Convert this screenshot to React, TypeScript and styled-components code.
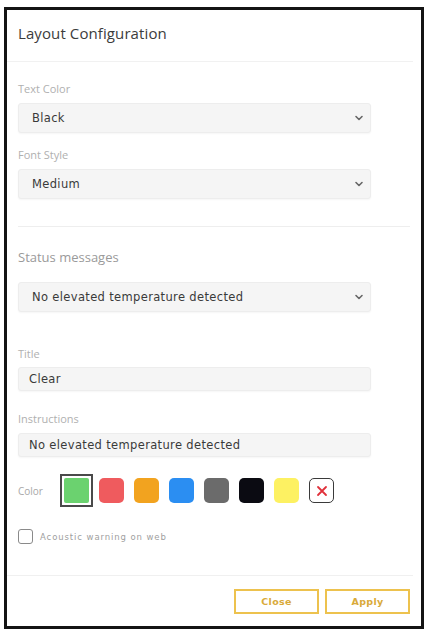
import * as React from 'react';
import styled, { createGlobalStyle } from 'styled-components';

const Global = createGlobalStyle`
  html, body { margin: 0; padding: 0; background: #ffffff; }
  body { font-family: "Open Sans", "DejaVu Sans", sans-serif; }
  * { box-sizing: border-box; }
`;

const Frame = styled.div`
  margin: 7px 0 0 4px;
  width: 420px;
  height: 622px;
  border: 3px solid #141414;
  background: #ffffff;
  display: flex;
  flex-direction: column;
`;

const Header = styled.header`
  height: 52px;
  display: flex;
  align-items: center;
  padding: 0 0 5px 11px;
  margin-right: 8px;
  border-bottom: 1px solid #f1f1f1;
  > h1 {
    margin: 0;
    font-size: 15px;
    font-weight: 400;
    color: #3c3c3c;
    letter-spacing: 0.1px;
  }
`;

const Body = styled.section`
  flex-grow: 1;
  display: flex;
  flex-direction: column;
  padding: 20px 0 0 11px;
`;

const Label = styled.label<{ $top?: number; $size?: number }>`
  display: block;
  margin-top: ${p => p.$top ?? 0}px;
  font-size: ${p => p.$size ?? 11}px;
  line-height: ${p => (p.$size ?? 11) + 3}px;
  color: ${p => (p.$size ? '#9a9a9a' : '#b0b0b0')};
`;

const Field = styled.div<{ $top: number; $h: number; $pad?: number }>`
  margin-top: ${p => p.$top}px;
  width: 353px;
  height: ${p => p.$h}px;
  background: #f5f5f5;
  border: 1px solid #ededed;
  border-radius: 3px;
  box-shadow: 0 1px 2px rgba(0, 0, 0, 0.04);
  display: flex;
  align-items: center;
  justify-content: space-between;
  padding: 0 6px 0 ${p => p.$pad ?? 13}px;
  font-family: "DejaVu Sans", sans-serif;
  font-size: 11.5px;
  letter-spacing: 0.35px;
  color: #3a3a3a;
`;

const Divider = styled.hr`
  margin: 27px 11px 0 0;
  border: none;
  border-top: 1px solid #eeeeee;
  height: 0;
`;

const ColorRow = styled.div`
  margin-top: 17px;
  display: flex;
  align-items: center;
  > span {
    width: 42px;
    font-size: 10px;
    color: #a8a8a8;
  }
`;

const Swatches = styled.div`
  display: flex;
  gap: 2px;
`;

const Slot = styled.div<{ $selected?: boolean }>`
  width: 33px;
  height: 33px;
  padding: 2px;
  border: 2px solid ${p => (p.$selected ? '#4a4a4a' : 'transparent')};
`;

const Chip = styled.div<{ $color: string; $square?: boolean }>`
  width: 25px;
  height: 25px;
  border-radius: ${p => (p.$square ? '2px' : '5px')};
  background: ${p => p.$color};
`;

const NoneChip = styled.div`
  width: 25px;
  height: 25px;
  border-radius: 5px;
  border: 1.5px solid #3a3a3a;
  background: #ffffff;
  display: flex;
  align-items: center;
  justify-content: center;
`;

const CheckRow = styled.label`
  margin-top: 22px;
  display: flex;
  align-items: center;
  gap: 7px;
  > i {
    width: 15px;
    height: 15px;
    border: 1px solid #8a8a8a;
    border-radius: 3px;
    background: #fff;
  }
  > span {
    font-family: "DejaVu Sans", sans-serif;
    font-size: 8.5px;
    letter-spacing: 0.9px;
    color: #a0a0a0;
  }
`;

const Footer = styled.footer`
  height: 51px;
  margin-right: 8px;
  border-top: 1px solid #f0f0f0;
  display: flex;
  justify-content: flex-end;
  align-items: flex-start;
  padding: 13px 3px 0 0;
  gap: 6px;
`;

const Button = styled.button`
  width: 85px;
  height: 25px;
  background: #ffffff;
  border: 2px solid #edc24e;
  font-family: "DejaVu Sans", sans-serif;
  font-size: 9.5px;
  font-weight: 700;
  color: #d9aa3a;
  letter-spacing: 0.3px;
`;

const Chevron = () => (
  <svg width="10" height="10" viewBox="0 0 10 10">
    <path d="M2 3.5 L5 6.5 L8 3.5" fill="none" stroke="#666" strokeWidth="1.6" strokeLinecap="round" strokeLinejoin="round" />
  </svg>
);

const colors = ['#ef5b5e', '#f2a31f', '#2b8ef2', '#6b6b6b', '#0b0b12', '#fdf162'];

export default function App() {
  return (
    <>
      <Global />
      <Frame>
        <Header>
          <h1>Layout Configuration</h1>
        </Header>
        <Body>
          <Label>Text Color</Label>
          <Field $top={7} $h={30}>Black<Chevron /></Field>
          <Label $top={15}>Font Style</Label>
          <Field $top={7} $h={30}>Medium<Chevron /></Field>
          <Divider />
          <Label $top={22} $size={13}>Status messages</Label>
          <Field $top={17} $h={30}>No elevated temperature detected<Chevron /></Field>
          <Label $top={35}>Title</Label>
          <Field $top={6} $h={24} $pad={10}>Clear</Field>
          <Label $top={21}>Instructions</Label>
          <Field $top={7} $h={24} $pad={10}>No elevated temperature detected</Field>
          <ColorRow>
            <span>Color</span>
            <Swatches>
              <Slot $selected><Chip $color="#6bd26f" $square /></Slot>
              {colors.map(c => (
                <Slot key={c}><Chip $color={c} /></Slot>
              ))}
              <Slot>
                <NoneChip>
                  <svg width="12" height="12" viewBox="0 0 12 12">
                    <path d="M2 2 L10 10 M10 2 L2 10" stroke="#e0303a" strokeWidth="1.8" strokeLinecap="round" />
                  </svg>
                </NoneChip>
              </Slot>
            </Swatches>
          </ColorRow>
          <CheckRow>
            <i />
            <span>Acoustic warning on web</span>
          </CheckRow>
        </Body>
        <Footer>
          <Button>Close</Button>
          <Button>Apply</Button>
        </Footer>
      </Frame>
    </>
  );
}
